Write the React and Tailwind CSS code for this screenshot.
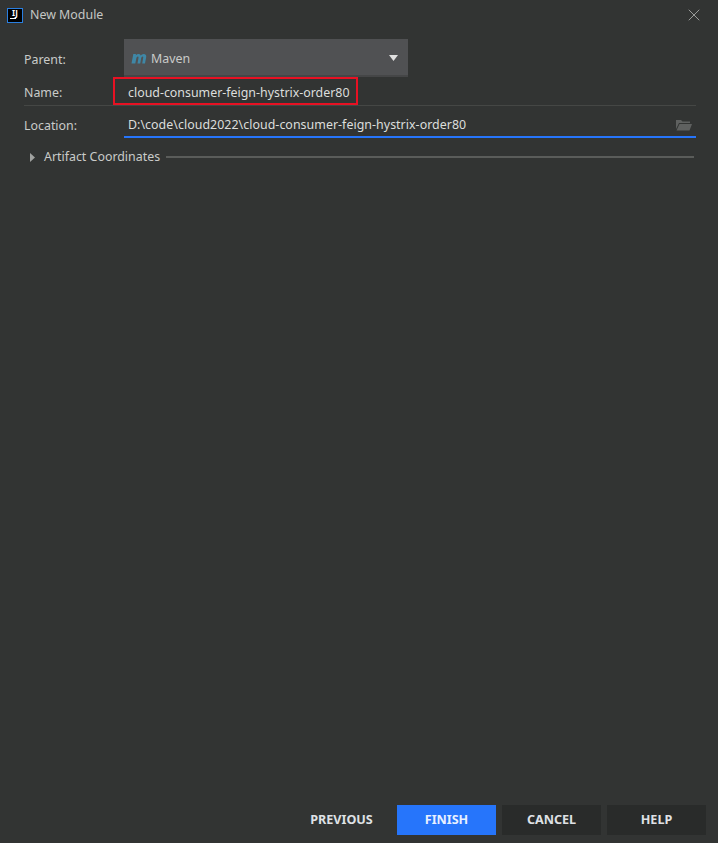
import { X } from 'lucide-react';

const font = { fontFamily: '"Noto Sans", sans-serif' };

function Footer() {
  return (
    <div className="mt-auto flex justify-end gap-[6px] pr-[12px] pb-[8px] text-[12.6px] font-bold text-[#dfe1e5]">
      <div className="w-[99px] h-[30px] flex items-center justify-center">PREVIOUS</div>
      <div className="w-[99px] h-[30px] flex items-center justify-center bg-[#2675fb] text-[#e8f0ff]">FINISH</div>
      <div className="w-[99px] h-[30px] flex items-center justify-center bg-[#292b2a]">CANCEL</div>
      <div className="w-[99px] h-[30px] flex items-center justify-center bg-[#292b2a]">HELP</div>
    </div>
  );
}

export default function App() {
  return (
    <div style={font} className="w-[718px] h-[843px] bg-[#323433] flex flex-col text-[12.4px] text-[#c9cbc9] overflow-hidden">
      {/* Title bar */}
      <div className="h-[30px] flex items-center pl-[7px] pr-[14px] shrink-0">
        <div className="w-[16px] h-[15px] mt-[1px] bg-black border border-[#2a7fe0] flex flex-col items-center justify-start">
          <span className="text-[8px] leading-[8px] font-bold text-white">IJ</span>
          <span className="w-[6px] h-px bg-white mt-[1px] self-start ml-[2px]"></span>
        </div>
        <span className="ml-[7px] text-[12.4px] text-[#c4c6c4]">New Module</span>
        <X className="ml-auto w-[20px] h-[20px] text-[#9a9c9a]" strokeWidth={1.2} />
      </div>

      {/* Form */}
      <div className="pt-[9px] pl-[24px] pr-[22px]">
        <div className="flex items-center h-[38px]">
          <span className="w-[100px] pt-[4px]">Parent:</span>
          <div className="w-[284px] h-[38px] bg-[#505153] border-b-2 border-[#454647] flex items-center pl-[7px] pr-[9px] text-[#c9cbc9]">
            <svg width="16" height="11" viewBox="0 0 16 11" className="mr-[4px] mt-[2px]">
              <path d="M0.5 10.5 L2.3 1 H5 L4.8 2.2 Q6.5 0.6 8 1 Q9.4 1.4 9.6 2.6 Q11.2 0.6 13.2 1 Q15.6 1.5 15.2 4 L14 10.5 H11.2 L12.2 4.8 Q12.4 3.6 11.5 3.6 Q10.5 3.7 10.2 5 L9.2 10.5 H6.5 L7.5 4.8 Q7.7 3.6 6.8 3.6 Q5.7 3.7 5.4 5 L4.3 10.5 Z" fill="#3f87a6" />
            </svg>
            <span className="pt-[4px]">Maven</span>
            <svg width="10" height="6" viewBox="0 0 10 6" className="ml-auto mt-[2px]">
              <path d="M0 0 H9 L4.5 6 Z" fill="#e0e0e0" />
            </svg>
          </div>
        </div>

        <div className="flex items-center h-[29px] border-b border-[#454745] relative">
          <span className="w-[100px] pt-[4px]">Name:</span>
          <span className="pl-[4px] pt-[4px] text-[#dcdedc]">cloud-consumer-feign-hystrix-order80</span>
          {/* red annotation */}
          <div className="absolute left-[89px] top-0 w-[245px] h-[28px] border-2 border-[#e81123]"></div>
        </div>

        <div className="flex items-center h-[32px]">
          <span className="w-[100px] pt-[9px]">Location:</span>
          <div className="flex-1 h-[32px] border-b-2 border-[#2675fb] flex items-center pl-[4px] pr-[4px] text-[#dcdedc]">
            <span className="pt-[9px] tracking-[0.04px]">D:\code\cloud2022\cloud-consumer-feign-hystrix-order80</span>
            <svg width="16" height="12" viewBox="0 0 16 12" className="ml-auto mt-[8px]">
              <path d="M0 1 H5 L6.5 2.5 H14 V4 H3 L0 10 Z" fill="#5f6160" />
              <path d="M3.5 5 H16 L13.5 11.5 H0.5 Z" fill="#5f6160" />
            </svg>
          </div>
        </div>

        <div className="flex items-center h-[38px] pl-[6px] pr-[2px]">
          <svg width="5" height="9" viewBox="0 0 5 9">
            <path d="M0 0 L5 4.5 L0 9 Z" fill="#a0a2a0" />
          </svg>
          <span className="ml-[9px]">Artifact Coordinates</span>
          <div className="flex-1 h-[2px] ml-[6px] bg-[#5a5c5a]"></div>
        </div>
      </div>

      <Footer />
    </div>
  );
}
